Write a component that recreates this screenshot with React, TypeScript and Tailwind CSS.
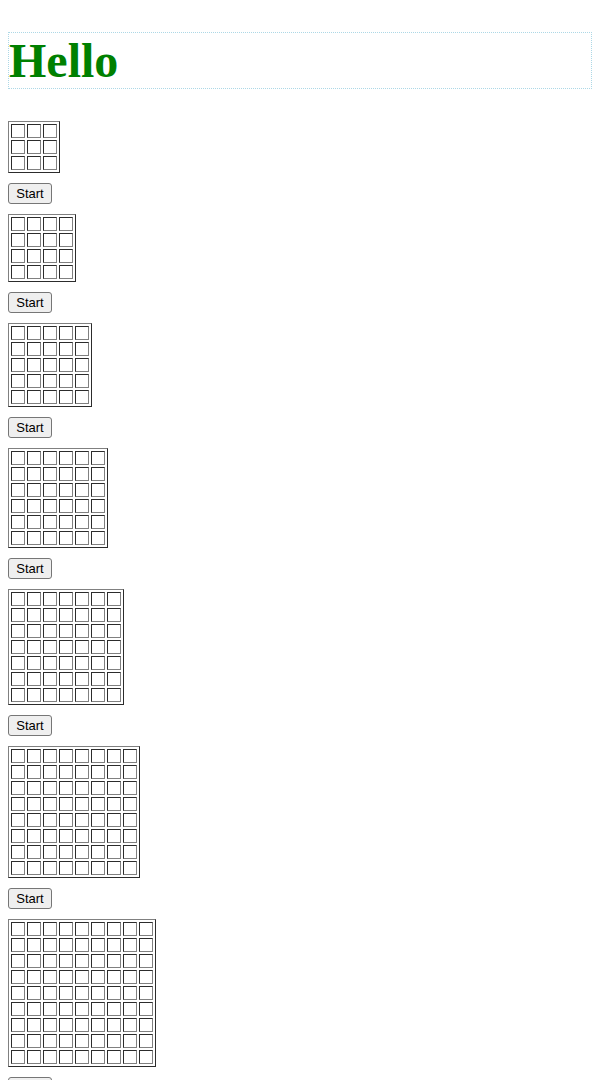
const boardSizes = [3, 4, 5, 6, 7, 8, 9];

function Board({ size }: { size: number }) {
  const line = Array.from({ length: size }, (_, index) => index);

  return (
    <div className="flex flex-col items-start gap-2.5">
      <table className="border-separate border border-[#808080] [border-spacing:2px] [border-style:outset]">
        <tbody>
          {line.map((row) => (
            <tr key={row}>
              {line.map((column) => (
                <td
                  key={column}
                  className="size-3.5 border border-[#808080] p-0 [border-style:inset]"
                />
              ))}
            </tr>
          ))}
        </tbody>
      </table>
      <button
        type="button"
        className="min-w-11 rounded-[3px] border border-[#767676] bg-[#efefef] px-1.5 text-center font-['Liberation_Sans',Arial,sans-serif] text-[13px] leading-[19px] text-black"
      >
        Start
      </button>
    </div>
  );
}

export default function App() {
  return (
    <main className="flex flex-col gap-8 bg-white px-2 pt-8">
      <h1 className="border border-dotted border-[#add8e6] font-['Liberation_Serif',serif] text-5xl leading-[55px] font-bold text-[#008000]">
        Hello
      </h1>
      <div className="flex flex-col gap-2.5">
        {boardSizes.map((size) => (
          <Board key={size} size={size} />
        ))}
      </div>
    </main>
  );
}
